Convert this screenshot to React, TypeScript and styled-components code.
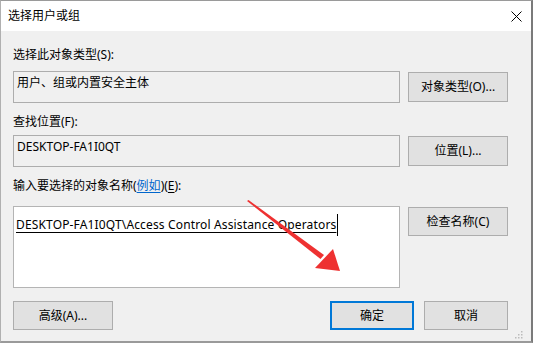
import React from "react";
import styled, { createGlobalStyle } from "styled-components";

const Global = createGlobalStyle`
  html, body { margin: 0; padding: 0; background: #f0f0f0; }
  body { font-family: "Noto Sans", "Noto Sans CJK SC", sans-serif; font-size: 12px; color: #000; }
  * { box-sizing: border-box; }
`;

const Window = styled.div`
  position: relative;
  width: 533px;
  height: 343px;
  display: flex;
  flex-direction: column;
  border-top: 1px solid #9a9a9a;
  border-right: 2px solid #7a7a7a;
  border-bottom: 2px solid #9a9a9a;
  border-left: 1px solid #b0b0b0;
  background: #f0f0f0;
  overflow: hidden;
`;

const TitleBar = styled.div`
  height: 30px;
  flex: none;
  background: #fff;
  display: flex;
  align-items: center;
  justify-content: space-between;
  padding: 0 9px 0 7px;
`;

const Title = styled.span`
  font-size: 12px;
  line-height: 16px;
`;

const CloseIcon = styled.svg`
  width: 11px;
  height: 11px;
  display: block;
`;

const Body = styled.div`
  flex: 1;
  display: flex;
  flex-direction: column;
  padding: 16px 0 0 12px;
`;

const Label = styled.div<{ $mt?: number }>`
  height: 16px;
  line-height: 16px;
  margin-top: ${(p) => p.$mt ?? 0}px;
  white-space: nowrap;
`;

const Key = styled.span`
  text-decoration: underline;
  text-underline-offset: 2px;
`;

const Link = styled.span`
  color: #0066cc;
  text-decoration: underline;
  text-underline-offset: 2px;
`;

const FieldRow = styled.div<{ $mt: number }>`
  display: grid;
  grid-template-columns: 387px 100px;
  column-gap: 8px;
  margin-top: ${(p) => p.$mt}px;
  align-items: start;
`;

const ReadBox = styled.div`
  height: 32px;
  border: 1px solid #adadad;
  background: #f0f0f0;
  padding: 3px 3px 0;
  line-height: 16px;
  white-space: nowrap;
`;

const NameBox = styled.div`
  position: relative;
  height: 82px;
  border: 1px solid #b4b4b4;
  background: #fff;
  padding: 7px 2px 0;
  line-height: 18px;
  white-space: nowrap;
`;

const Resolved = styled.span`
  text-decoration: underline;
  text-underline-offset: 3px;
  letter-spacing: 0.15px;
  border-right: 1px solid #000;
  padding-right: 1px;
  display: inline-block;
  line-height: 22px;
`;

const Button = styled.div<{ $w?: number; $h?: number; $mt?: number; $default?: boolean }>`
  width: ${(p) => p.$w ?? 100}px;
  height: ${(p) => p.$h ?? 30}px;
  margin-top: ${(p) => p.$mt ?? 0}px;
  background: #e1e1e1;
  border: ${(p) => (p.$default ? "2px solid #0078d7" : "1px solid #adadad")};
  display: flex;
  align-items: center;
  justify-content: center;
  white-space: nowrap;
  line-height: 16px;
`;

const Footer = styled.div`
  display: flex;
  align-items: center;
  margin-top: 13px;
  padding-right: 23px;
`;

const Spacer = styled.div`
  flex: 1;
`;

const FooterRight = styled.div`
  display: flex;
  gap: 10px;
`;

const ArrowOverlay = styled.svg`
  position: absolute;
  left: 0;
  top: 0;
  width: 533px;
  height: 343px;
  pointer-events: none;
`;

const Grip = styled.svg`
  position: absolute;
  right: 8px;
  bottom: 2px;
  width: 8px;
  height: 8px;
`;

export default function App() {
  return (
    <>
      <Global />
      <Window>
        <TitleBar>
          <Title>选择用户或组</Title>
          <CloseIcon viewBox="0 0 11 11">
            <path d="M0.5 0.5 L10.5 10.5 M10.5 0.5 L0.5 10.5" stroke="#000" strokeWidth="1" fill="none" />
          </CloseIcon>
        </TitleBar>
        <Body>
          <Label>选择此对象类型(S):</Label>
          <FieldRow $mt={8}>
            <ReadBox>用户、组或内置安全主体</ReadBox>
            <Button $mt={1} $h={30}>对象类型(O)...</Button>
          </FieldRow>
          <Label $mt={11}>查找位置(F):</Label>
          <FieldRow $mt={5}>
            <ReadBox>DESKTOP-FA1I0QT</ReadBox>
            <Button $mt={1} $h={30}>位置(L)...</Button>
          </FieldRow>
          <Label $mt={11}>
            输入要选择的对象名称(<Link>例如</Link>)(<Key>E</Key>):
          </Label>
          <FieldRow $mt={12}>
            <NameBox>
              <Resolved>DESKTOP-FA1I0QT\Access Control Assistance Operators</Resolved>
            </NameBox>
            <Button $mt={1} $h={29}>检查名称(C)</Button>
          </FieldRow>
          <Footer>
            <Button $w={100} $h={29}>高级(A)...</Button>
            <Spacer />
            <FooterRight>
              <Button $w={84} $h={29} $default>确定</Button>
              <Button $w={84} $h={29}>取消</Button>
            </FooterRight>
          </Footer>
        </Body>
        <ArrowOverlay viewBox="0 0 533 343">
          <polygon points="246,200 247.5,199 323,254 319.5,258" fill="#ee3131" />
          <polygon points="339,270 314,267 332,248" fill="#ee3131" />
        </ArrowOverlay>
        <Grip viewBox="0 0 8 8">
          <rect x="6" y="0" width="1.5" height="1.5" fill="#bbb" />
          <rect x="3" y="3" width="1.5" height="1.5" fill="#bbb" />
          <rect x="6" y="3" width="1.5" height="1.5" fill="#bbb" />
          <rect x="0" y="6" width="1.5" height="1.5" fill="#bbb" />
          <rect x="3" y="6" width="1.5" height="1.5" fill="#bbb" />
          <rect x="6" y="6" width="1.5" height="1.5" fill="#bbb" />
        </Grip>
      </Window>
    </>
  );
}
